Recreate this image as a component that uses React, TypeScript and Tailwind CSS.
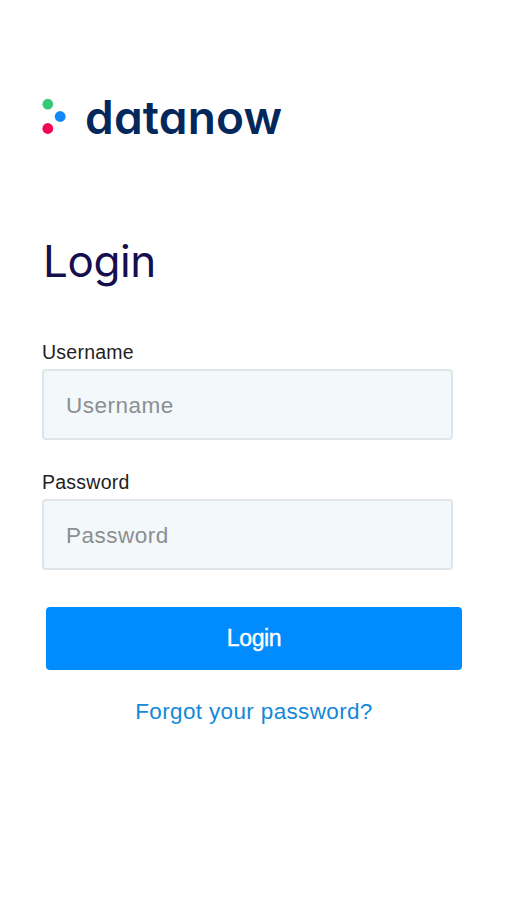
import { useState } from "react";

type FieldProps = {
  label: string;
  type: string;
  value: string;
  onChange: (value: string) => void;
};

function Logo() {
  return (
    <div className="flex h-10 items-center">
      <svg width="24" height="38" viewBox="0 0 24 38" className="mr-[19px] shrink-0">
        <circle cx="5.8" cy="6.2" r="5.4" fill="#37c978" />
        <circle cx="18.2" cy="18.5" r="5.4" fill="#1288f6" />
        <circle cx="5.8" cy="30.5" r="5.4" fill="#f5054f" />
      </svg>
      {/* cv11 is Inter's single-storey a */}
      <span className="text-[46px] leading-10 font-semibold tracking-[0.2px] text-[#04285c] [font-feature-settings:'cv11']">
        datanow
      </span>
    </div>
  );
}

function Field({ label, type, value, onChange }: FieldProps) {
  return (
    <label className="block w-[411px]">
      <span className="block h-[27px] text-[19.5px] leading-[20px] tracking-[0.25px] text-[#222]">{label}</span>
      <input
        type={type}
        placeholder={label}
        value={value}
        onChange={(e) => onChange(e.target.value)}
        className="block h-[71px] w-full rounded-[4px] border-2 border-[#dfe5e8] bg-[#f3f8fb] px-[22px] pt-[2px] text-[22.5px] tracking-[0.5px] text-[#222] outline-none placeholder:text-[#8b8f92]"
      />
    </label>
  );
}

export default function App() {
  const [username, setUsername] = useState("");
  const [password, setPassword] = useState("");

  return (
    <main className="min-h-screen bg-white pt-[97px] pl-[42px] font-['Inter',sans-serif]">
      <Logo />
      <h1 className="mt-[97px] ml-px h-[54px] text-[44px] leading-[54px] tracking-[-0.4px] text-[#160f4f]">Login</h1>

      <form onSubmit={(e) => e.preventDefault()} className="mt-[54px] font-['Liberation_Sans',sans-serif]">
        <div className="space-y-8">
          <Field label="Username" type="text" value={username} onChange={setUsername} />
          <Field label="Password" type="password" value={password} onChange={setPassword} />
        </div>

        <button
          type="submit"
          className="mt-[37px] ml-[4px] block h-[63px] w-[416px] rounded-[4px] bg-[#008cff] text-[23px] tracking-[-0.4px] text-white [-webkit-text-stroke:0.4px_white]"
        >
          Login
        </button>
        <a href="#" className="mt-[27px] ml-[4px] block w-[416px] text-center text-[22.5px] leading-[30px] tracking-[0.35px] text-[#1489d8]">
          Forgot your password?
        </a>
      </form>
    </main>
  );
}
